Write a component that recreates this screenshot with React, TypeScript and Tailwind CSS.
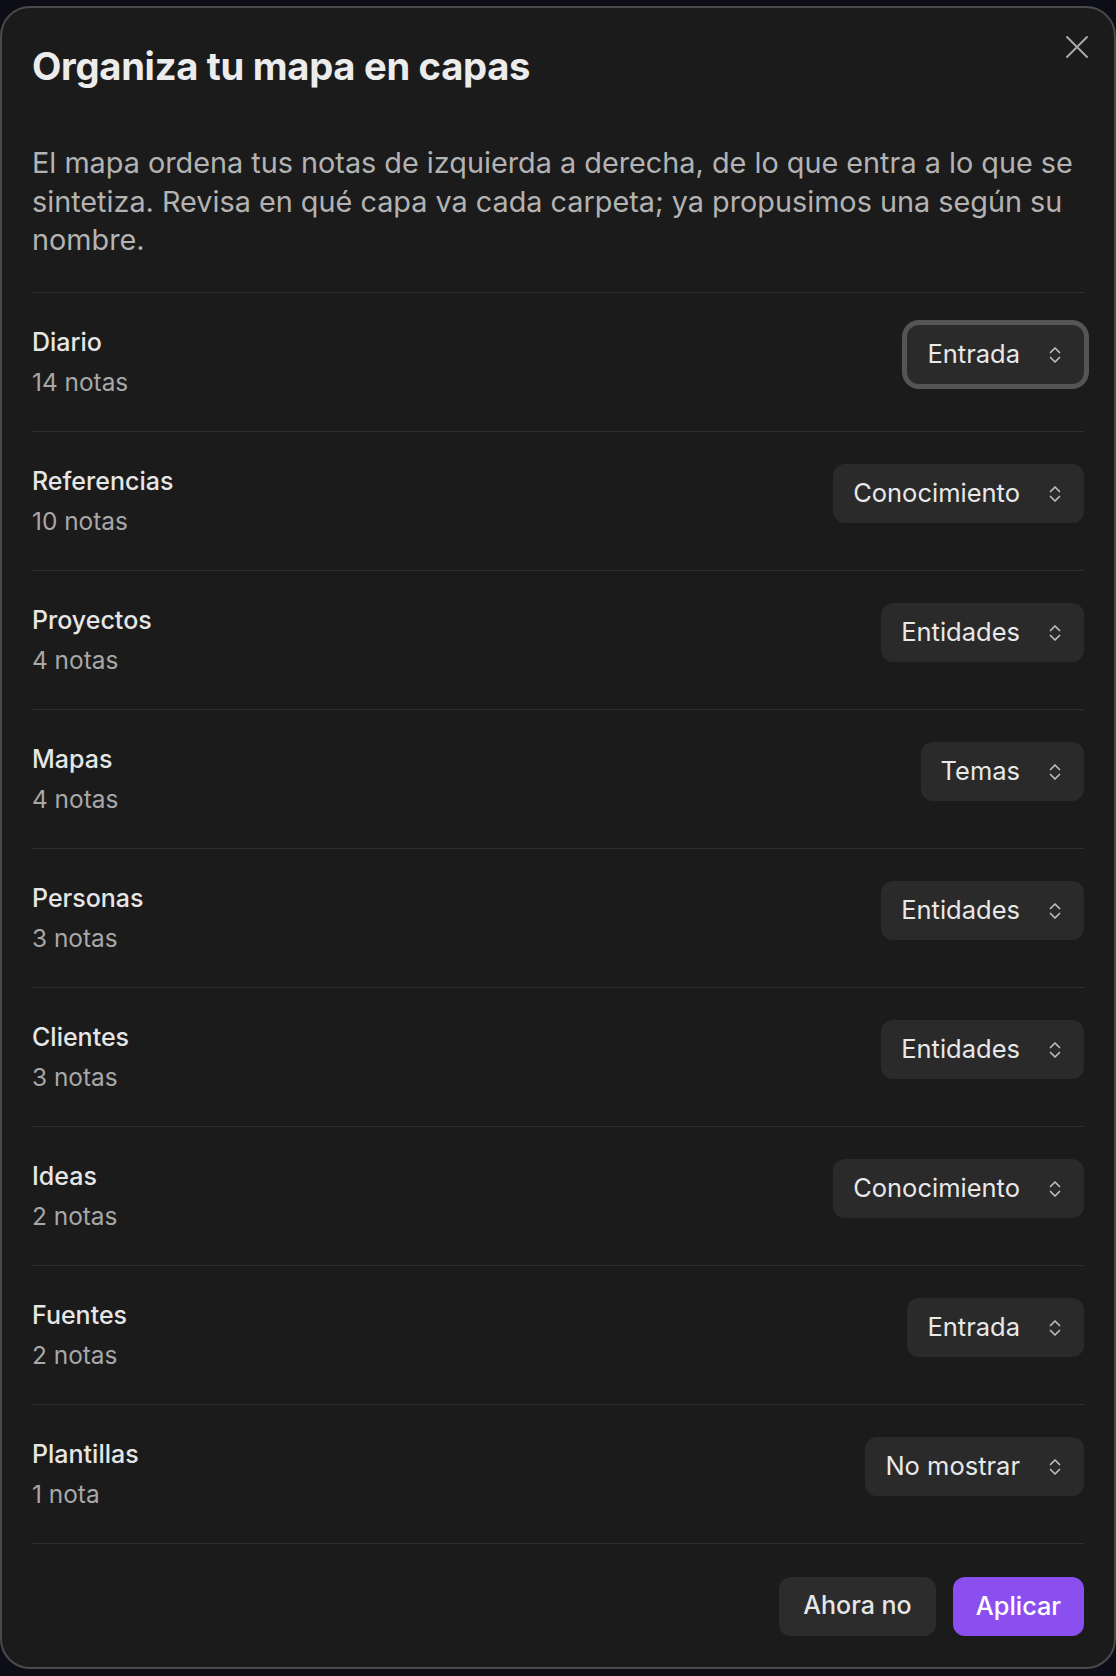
import React from "react";

type Folder = {
  name: string;
  count: string;
  layer: string;
};

const folders: Folder[] = [
  { name: "Diario", count: "14 notas", layer: "Entrada" },
  { name: "Referencias", count: "10 notas", layer: "Conocimiento" },
  { name: "Proyectos", count: "4 notas", layer: "Entidades" },
  { name: "Mapas", count: "4 notas", layer: "Temas" },
  { name: "Personas", count: "3 notas", layer: "Entidades" },
  { name: "Clientes", count: "3 notas", layer: "Entidades" },
  { name: "Ideas", count: "2 notas", layer: "Conocimiento" },
  { name: "Fuentes", count: "2 notas", layer: "Entrada" },
  { name: "Plantillas", count: "1 nota", layer: "No mostrar" },
];

function UpDown() {
  return (
    <svg width="14" height="20" viewBox="0 0 14 20" fill="none">
      <path
        d="M2.5 7.5 7 3l4.5 4.5M2.5 12.5 7 17l4.5-4.5"
        stroke="#bdbdbd"
        strokeWidth="1.7"
        strokeLinecap="round"
        strokeLinejoin="round"
      />
    </svg>
  );
}

function LayerSelect({ value, focused }: { value: string; focused?: boolean }) {
  return (
    <button
      className={`flex h-[59px] items-center gap-[28px] rounded-[12px] bg-[#2a2a2a] pl-[20px] pr-[22px] text-[25.5px] text-[#e8e8e8] ${
        focused ? "ring-[5px] ring-[#555555]" : ""
      }`}
    >
      <span>{value}</span>
      <UpDown />
    </button>
  );
}

export default function App() {
  return (
    <div
      className="min-h-[1676px] w-full bg-[#0d0d17] pt-[6px]"
      style={{ fontFamily: "Inter, 'Noto Sans', sans-serif" }}
    >
      <div className="relative mx-auto h-[1663px] w-[1116px] rounded-[30px] border-2 border-[#4a4a4a] bg-[#1b1b1b] px-[30px] pt-[35px]">
        <button className="absolute right-[25px] top-[27px]" aria-label="Cerrar">
          <svg width="24" height="24" viewBox="0 0 24 24" fill="none">
            <path
              d="M2 2l20 20M22 2 2 22"
              stroke="#a8a8a8"
              strokeWidth="2"
              strokeLinecap="round"
            />
          </svg>
        </button>

        <h1 className="text-[38.2px] font-bold leading-[46px] tracking-[-0.3px] text-[#ececec]">
          Organiza tu mapa en capas
        </h1>

        <p className="mt-[55px] text-[28.8px] leading-[38.5px] text-[#b3b3b3]">
          El mapa ordena tus notas de izquierda a derecha, de lo que entra a lo que se
          sintetiza. Revisa en qué capa va cada carpeta; ya propusimos una según su
          nombre.
        </p>

        <div className="mt-[32px] border-b border-[#2f2f2f]">
          {folders.map((f, i) => (
            <div
              key={f.name}
              className="flex h-[139px] items-center justify-between border-t border-[#2f2f2f]"
            >
              <div className="flex flex-col gap-[4px]">
                <span className="text-[25px] font-medium leading-[36px] text-[#e6e6e6]">
                  {f.name}
                </span>
                <span className="text-[24.4px] leading-[36px] text-[#a8a8a8]">
                  {f.count}
                </span>
              </div>
              <div className="mb-[14px]">
                <LayerSelect value={f.layer} focused={i === 0} />
              </div>
            </div>
          ))}
        </div>

        <div className="mt-[33px] flex justify-end gap-[17px]">
          <button className="h-[59px] w-[157px] rounded-[12px] bg-[#2c2c2c] text-[25px] font-medium text-[#e6e6e6]">
            Ahora no
          </button>
          <button className="h-[59px] w-[131px] rounded-[12px] bg-[#8b4ff0] text-[25.3px] font-medium text-white">
            Aplicar
          </button>
        </div>
      </div>
    </div>
  );
}
